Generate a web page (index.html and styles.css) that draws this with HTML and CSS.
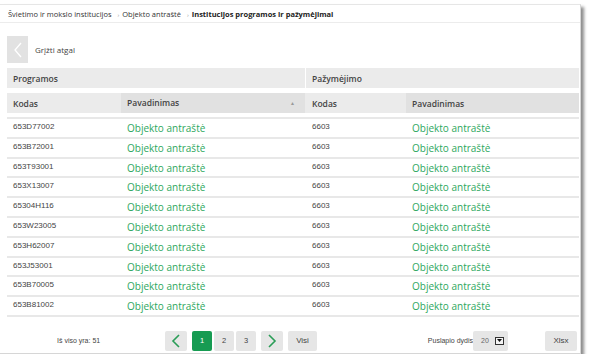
FILE: index.html
```html
<!DOCTYPE html>
<html lang="lt">
<head>
  <meta charset="UTF-8" />
  <title>Institucijos programos ir pažymėjimai</title>
  <link rel="stylesheet" href="styles.css">
</head>
<body>
  <div class="card">
    <div class="breadcrumb">
      <span>Švietimo ir mokslo institucijos</span>
      <span class="sep">›</span>
      <span>Objekto antraštė</span>
      <span class="sep">›</span>
      <span class="current">Institucijos programos ir pažymėjimai</span>
    </div>

    <div class="back">
      <span class="back-btn">
        <svg width="10" height="16" viewBox="0 0 10 16"><path d="M8 1 L2 8 L8 15" fill="none" stroke="#fff" stroke-width="1.3"/></svg>
      </span>
      <span class="back-text">Grįžti atgal</span>
    </div>

    <table class="grid">
      <colgroup>
        <col class="c1"><col class="c2"><col class="c3"><col class="c4">
      </colgroup>
      <thead>
        <tr class="group">
          <th colspan="2">Programos</th>
          <th colspan="2" class="split">Pažymėjimo</th>
        </tr>
        <tr class="head">
          <th>Kodas</th>
          <th class="sorted">Pavadinimas <span class="arrow">▲</span></th>
          <th class="split">Kodas</th>
          <th class="sorted">Pavadinimas</th>
        </tr>
      </thead>
      <tbody id="rows"></tbody>
    </table>

    <div class="footer">
      <div class="total">Iš viso yra: 51</div>
      <div class="pager">
        <button class="nav">
          <svg width="10" height="14" viewBox="0 0 10 14"><path d="M8 1 L2 7 L8 13" fill="none" stroke="#2a9d57" stroke-width="1.6"/></svg>
        </button>
        <button class="page active">1</button>
        <button class="page">2</button>
        <button class="page">3</button>
        <button class="nav next">
          <svg width="10" height="14" viewBox="0 0 10 14"><path d="M2 1 L8 7 L2 13" fill="none" stroke="#2a9d57" stroke-width="1.6"/></svg>
        </button>
        <button class="all">Visi</button>
      </div>
      <div class="size">
        <span class="size-label">Puslapio dydis</span>
        <span class="select">20 <span class="drop"><svg width="5" height="3" viewBox="0 0 5 3"><path d="M0 0 H5 L2.5 3 Z" fill="#111"/></svg></span></span>
      </div>
      <button class="xlsx">Xlsx</button>
    </div>
  </div>

  <script>
    const codes = ["653D77002", "653B72001", "653T93001", "653X13007", "65304H116",
                   "653W23005", "653H62007", "653J53001", "653B70005", "653B81002"];
    const rows = document.getElementById("rows");
    codes.forEach((code) => {
      const tr = document.createElement("tr");
      tr.innerHTML = `
        <td class="code">${code}</td>
        <td class="name">Objekto antraštė</td>
        <td class="code split">6603</td>
        <td class="name">Objekto antraštė</td>
      `;
      rows.appendChild(tr);
    });
  </script>
</body>
</html>
```

FILE: styles.css
```css
* {
  box-sizing: border-box;
}

body {
  margin: 0;
  padding: 0;
  background: #fff;
  font-family: 'Open Sans', 'Liberation Sans', sans-serif;
  color: #333;
}

.card {
  width: 581px;
  height: 350px;
  margin-top: 4px;
  border-top: 1px solid #e6e6e6;
  border-right: 1px solid #d6d6d6;
  border-bottom: 1px solid #d6d6d6;
  box-shadow: 3px 3px 3px rgba(0, 0, 0, 0.45);
  background: #fff;
}

.breadcrumb {
  height: 18px;
  padding: 4px 0 0 8px;
  font-size: 7.5px;
  color: #333;
  border-bottom: 1px solid #ececec;
  white-space: nowrap;
}

.breadcrumb .sep {
  color: #999;
  font-size: 6px;
  margin: 0 1px 0 4px;
}

.breadcrumb .current {
  font-weight: bold;
  color: #222;
}

.back {
  display: flex;
  align-items: center;
  margin: 13px 0 0 7px;
  height: 27px;
}

.back-btn {
  width: 21px;
  height: 27px;
  background: #e2e2e2;
  display: flex;
  align-items: center;
  justify-content: center;
}

.back-text {
  margin-left: 7px;
  font-size: 8px;
  color: #444;
}

.grid {
  margin: 5px 0 0 7px;
  width: 572px;
  border-collapse: separate;
  border-spacing: 0;
  table-layout: fixed;
}

.c1 { width: 114px; }
.c2 { width: 184px; }
.c3 { width: 101px; }
.c4 { width: 173px; }

.grid th {
  text-align: left;
  font-size: 8.5px;
  font-weight: 600;
  color: #444;
  padding: 0 0 0 6px;
  background: #ebebeb;
}

.grid .group th {
  height: 25px;
  border-bottom: 5px solid #fff;
}

.grid .group th.split {
  border-left: 1px solid #fff;
}

.grid .head th {
  height: 24px;
  border-bottom: 4px solid #fff;
}

.grid .head th.sorted {
  background: #e1e1e1;
}

.grid .head th.split {
  padding-left: 7px;
}

.arrow {
  float: right;
  margin-right: 10px;
  font-size: 5px;
  color: #999;
  line-height: 12px;
}

.grid td {
  height: 19.8px;
  border-top: 2px solid #e8e8e8;
  padding: 0 0 0 6px;
  vertical-align: top;
}

.grid tbody tr:last-child td {
  height: 21.8px;
  border-bottom: 2px solid #e8e8e8;
}

.grid td.code {
  font-family: 'Liberation Sans', sans-serif;
  font-size: 8px;
  color: #444;
  padding-top: 3px;
}

.grid td.split {
  padding-left: 7px;
}

.grid td.name {
  font-size: 10px;
  color: #2ea75e;
  padding-top: 2px;
}

.footer {
  display: flex;
  align-items: center;
  height: 20px;
  margin-top: 14px;
}

.total {
  width: 165px;
  padding-left: 57px;
  font-family: 'Liberation Sans', sans-serif;
  font-size: 7px;
  color: #444;
}

.pager {
  display: flex;
  align-items: center;
}

button {
  border: none;
  border-radius: 2px;
  background: #e6e6e6;
  height: 20px;
  padding: 0;
  font-family: 'Liberation Sans', sans-serif;
  font-size: 7.5px;
  color: #444;
  cursor: pointer;
  display: flex;
  align-items: center;
  justify-content: center;
}

.nav {
  width: 22px;
}

.next {
  margin-left: 5px;
}

.page {
  width: 20px;
  margin-left: 2px;
}

.page.active {
  background: #169b52;
  color: #fff;
  margin-left: 5px;
}

.all {
  width: 29px;
  margin-left: 5px;
  font-size: 8px;
}

.size {
  margin-left: auto;
  display: flex;
  align-items: center;
}

.size-label {
  font-family: 'Liberation Sans', sans-serif;
  font-size: 7px;
  color: #444;
}

.select {
  width: 35px;
  height: 20px;
  background: #e6e6e6;
  border-radius: 2px;
  display: flex;
  align-items: center;
  padding-left: 8px;
  font-family: 'Liberation Sans', sans-serif;
  font-size: 7px;
  color: #666;
}

.drop {
  margin-left: 6px;
  width: 9px;
  height: 8px;
  border: 1px solid #333;
  background: #f4f4f4;
  display: flex;
  align-items: center;
  justify-content: center;
}

.xlsx {
  width: 32px;
  margin-left: 37px;
  margin-right: 3px;
  font-size: 8px;
}
```
